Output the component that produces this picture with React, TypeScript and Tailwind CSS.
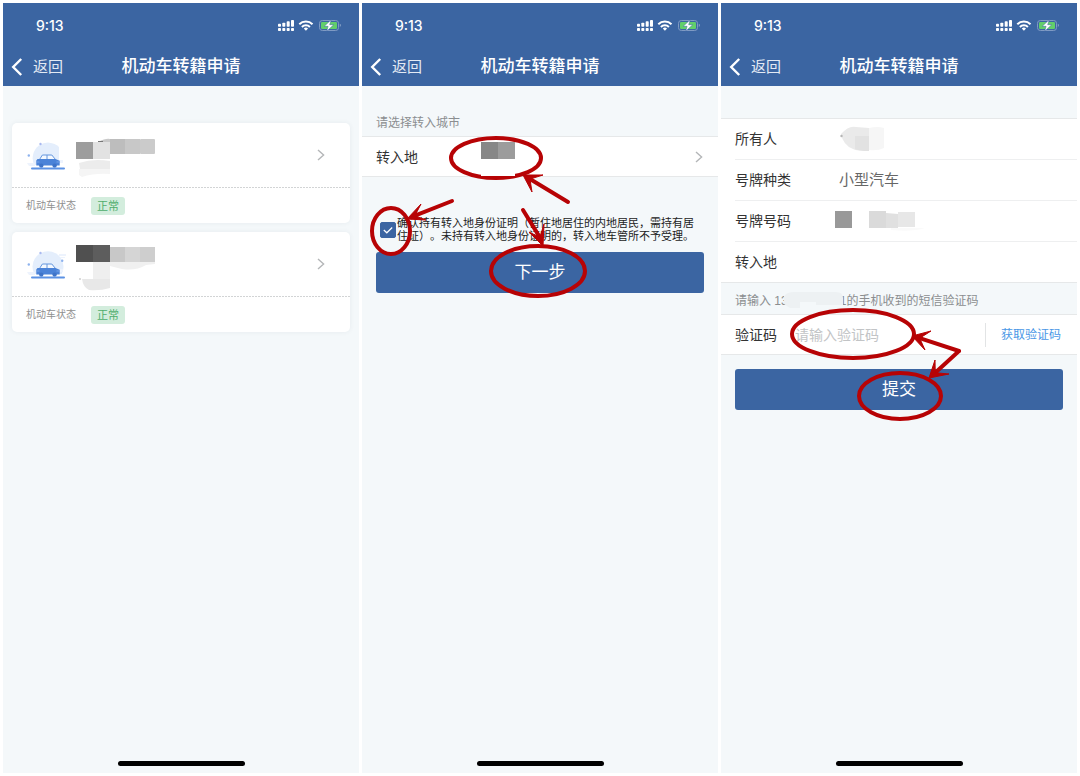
import { useState, type ReactNode } from "react";

type Point = [number, number];

function StatusBar() {
  return (
    <div className="flex h-11 items-center justify-between pr-4 pl-[33px]">
      <span className="pt-0.5 font-['Inter',sans-serif] text-sm font-medium">9:13</span>
      <svg width="66" height="14" viewBox="0 0 66 14" aria-hidden="true">
        <g fill="#fff">
          <rect x="1" y="10" width="3" height="3" rx="0.8" />
          <rect x="5.3" y="10" width="3" height="3" rx="0.8" />
          <rect x="9.7" y="10" width="3" height="3" rx="0.8" />
          <rect x="14" y="10" width="3" height="3" rx="0.8" />
          <rect x="1" y="5.8" width="3" height="3" rx="0.8" />
          <rect x="5.3" y="4.8" width="3" height="4" rx="0.8" />
          <rect x="9.7" y="3.3" width="3" height="5.5" rx="0.8" />
          <rect x="14" y="2" width="3" height="6.8" rx="0.8" />
        </g>
        <g fill="none" stroke="#fff" strokeWidth="2">
          <path d="M22.3 6.2a9.4 9.4 0 0 1 13.2 0" />
          <path d="M24.9 9a5.7 5.7 0 0 1 8 0" />
        </g>
        <path d="M26.8 10.5a3.1 3.1 0 0 1 4.2 0l-2.1 2.2z" fill="#fff" />
        <rect x="42.5" y="2.5" width="19" height="10" rx="2.8" fill="none" stroke="#7f9ac4" />
        <rect x="44" y="4" width="16" height="7" rx="1.2" fill="#62cf6a" />
        <path d="M62.8 5.8v3.2c1.4-.4 1.4-2.8 0-3.2z" fill="#92a9cc" />
        <path d="M54.2 1.8 47.2 8.3h3.9l-1.4 5 7-6.6h-4z" fill="#fff" stroke="#3b65a2" strokeWidth="0.5" />
      </svg>
    </div>
  );
}

function Phone({ children, marks }: { children: ReactNode; marks?: ReactNode }) {
  return (
    <section className="relative flex flex-col overflow-hidden bg-[#f4f8fa]">
      <header className="bg-[#3b65a2] text-white">
        <StatusBar />
        <div className="grid h-[39px] grid-cols-[1fr_auto_1fr] items-center">
          <a href="#back" className="flex items-center gap-2.5 pl-2 text-[15px] leading-5 text-[#e3eaf4]">
            <svg width="12" height="20" viewBox="0 0 12 20" aria-hidden="true">
              <path d="M10.2 2 2.2 10l8 8" fill="none" stroke="#fff" strokeWidth="2.4" />
            </svg>
            返回
          </a>
          <h1 className="text-[17px] leading-6 font-medium">机动车转籍申请</h1>
        </div>
      </header>
      <main className="flex-1">{children}</main>
      <div className="mx-auto mb-[7px] h-[5px] w-[127px] rounded-full bg-black" />
      {marks && (
        <svg className="pointer-events-none absolute inset-0 z-10 h-full w-full" fill="none" stroke="#b70305" strokeWidth="4" aria-hidden="true">
          {marks}
        </svg>
      )}
    </section>
  );
}

function Arrow({ from, tip, barbs }: { from: Point; tip: Point; barbs: [Point, Point] }) {
  const [a, b] = barbs;
  const neck: Point = [(a[0] + b[0]) * 0.24 + tip[0] * 0.52, (a[1] + b[1]) * 0.24 + tip[1] * 0.52];
  return (
    <g>
      <path d={`M${from} L${neck}`} strokeLinecap="round" />
      <path d={`M${tip} L${a} L${neck} L${b} Z`} fill="#b70305" strokeWidth="1" strokeLinejoin="round" />
    </g>
  );
}

function Chevron() {
  return (
    <svg width="10" height="14" viewBox="0 0 10 14" aria-hidden="true">
      <path d="M2 2l5.6 5L2 12" fill="none" stroke="#b4b6b8" strokeWidth="1.4" />
    </svg>
  );
}

function CarIcon({ full }: { full?: boolean }) {
  return (
    <svg width="42" height="32" viewBox="0 0 42 32" aria-hidden="true">
      <path
        d={full ? "M8.3 26A15.5 15.5 0 1 1 35.7 26z" : "M8.3 26A15.5 15.5 0 0 1 33 8V26z"}
        fill="#e4eefc"
      />
      <path d="M1 24h8v3H3zM32 21h5v3h-5z" fill="#edf3fd" />
      {full && <path d="M33 6h7v2h-7zM34 9h5v1h-5z" fill="#edf3fd" />}
      <circle cx="14.5" cy="5" r="1.2" fill="#a9b9f0" />
      <circle cx="2.8" cy="16.5" r="1.2" fill="#8db2ee" />
      {full && <circle cx="36.2" cy="12.8" r="1.2" fill="#8db2ee" />}
      <path d="M13.5 20.5 16.4 16h9.4l3.7 4.5z" fill="#f3f8ff" stroke="#6496de" strokeWidth="1" />
      <path d="M21 16v4.5" stroke="#6496de" />
      <path d="M11.5 20h18l4.2 1.8v4.7H10.3v-5z" fill="#4b83d8" />
      <path d="M10.5 23h3M30.5 23h3" stroke="#78a4e8" />
      <circle cx="15.3" cy="26.6" r="2.2" fill="#3f74c8" />
      <circle cx="28.6" cy="26.6" r="2.2" fill="#3f74c8" />
      <path d="M6 29.4h32" stroke="#5c92e4" strokeWidth="2" strokeLinecap="round" />
    </svg>
  );
}

function MosaicLight() {
  return (
    <svg width="84" height="46" viewBox="0 0 84 46" aria-hidden="true">
      <rect y="6" width="17" height="17" fill="#9d9d9d" />
      <rect x="17" y="6" width="17" height="17" fill="#e2e2e2" />
      <path d="M22 6q8-4 12-3v3z" fill="#c9c9c9" />
      <path d="M22 5.5h5" stroke="#777" />
      <rect x="34" y="3" width="15" height="15" fill="#bdbdbd" />
      <rect x="49" y="3" width="15" height="15" fill="#c8c8c8" />
      <rect x="64" y="3" width="15" height="15" rx="1" fill="#cbcbcb" />
      <path d="M3 27q14-5 31-2v8H4z" fill="#ececec" />
      <path d="M3 33h31v5q-16-1-28 3l-3-2z" fill="#f5f5f5" />
    </svg>
  );
}

function MosaicDark() {
  return (
    <svg width="84" height="48" viewBox="0 0 84 48" aria-hidden="true">
      <rect y="1" width="17" height="17" fill="#505050" />
      <rect x="17" y="1" width="17" height="17" fill="#5d5d5d" />
      <rect x="34" y="3" width="15" height="15" fill="#c8c8c8" />
      <rect x="49" y="3" width="15" height="15" fill="#d5d5d5" />
      <rect x="64" y="3" width="15" height="15" fill="#cecece" />
      <path d="M34 18h45v2l-9 1q-10 6-24 4l-12-3z" fill="#f0f0f0" />
      <rect x="17" y="18" width="17" height="17" fill="#efefef" />
      <path d="M6 35h28v9q-10 3-21 2-6-3-7-11z" fill="#e8e8e8" />
      <circle cx="4" cy="35" r="0.7" fill="#999" />
    </svg>
  );
}

function VehicleCard({ dark }: { dark?: boolean }) {
  return (
    <article className="rounded-[5px] bg-white shadow-[0_0_5px_rgba(40,60,80,0.07)]">
      <a href="#vehicle" aria-label="机动车" className="flex h-16 items-center pr-6 pl-[14px]">
        <CarIcon full={dark} />
        <span className="ml-2 flex-1 pt-2">{dark ? <MosaicDark /> : <MosaicLight />}</span>
        <Chevron />
      </a>
      <div className="h-px bg-[repeating-linear-gradient(90deg,#d2d4d5_0_2px,transparent_2px_3px)]" />
      <div className="flex h-[35px] items-center gap-[15px] px-[14px]">
        <span className="text-[10px] leading-4 text-[#8f8f8f]">机动车状态</span>
        <span className="rounded-[3px] bg-[#d3eddd] px-[6px] text-[11px] leading-[18px] text-[#4fad6c]">正常</span>
      </div>
    </article>
  );
}

function PrimaryButton({ children }: { children: ReactNode }) {
  return (
    <button type="button" className="block h-[41px] w-full rounded-[3px] bg-[#3b65a2] text-[17px] leading-6 text-white">
      {children}
    </button>
  );
}

function CityScreen() {
  const [checked, setChecked] = useState(true);
  return (
    <>
      <p className="px-[14px] pt-7 pb-1 text-xs leading-[18px] text-[#8b8e90]">请选择转入城市</p>
      <a href="#city" className="flex h-[41px] items-center border-y border-[#e6e8e9] bg-white pr-[14px] pl-[14px] text-sm text-[#333]">
        <span className="w-[105px]">转入地</span>
        <span className="flex-1 self-end">
          <svg className="relative z-20" width="34" height="34" viewBox="0 0 34 34" aria-hidden="true">
            <rect width="34" height="34" fill="#fff" />
            <rect width="17" height="17" fill="#878787" />
            <rect x="17" width="17" height="17" fill="#9c9c9c" />
          </svg>
        </span>
        <Chevron />
      </a>
      <div className="px-[14px] pt-10">
        <label className="mb-[9px] flex items-center pl-1 text-[11px] leading-[13px] text-[#222] [text-spacing-trim:space-all]">
          <span className="relative mr-px flex h-4 w-4 shrink-0">
            <input
              type="checkbox"
              checked={checked}
              onChange={(e) => setChecked(e.target.checked)}
              className="h-4 w-4 appearance-none rounded-[2px] border border-[#3b65a2] checked:bg-[#3b65a2]"
            />
            <svg className="pointer-events-none absolute inset-0" width="16" height="16" viewBox="0 0 16 16" aria-hidden="true">
              <path d="M3.8 8l3 2.8 5.4-5.3" fill="none" stroke="#fff" strokeWidth="1.2" />
            </svg>
          </span>
          <span>确认持有转入地身份证明（暂住地居住的内地居民，需持有居住证）。未持有转入地身份证明的，转入地车管所不予受理。</span>
        </label>
        <PrimaryButton>下一步</PrimaryButton>
      </div>
    </>
  );
}

function InfoRow({ label, children }: { label: string; children?: ReactNode }) {
  return (
    <div className="flex h-[41px] items-center border-b border-[#eeeff0] last:h-10 last:border-b-0">
      <dt className="w-[104px] text-sm text-[#333]">{label}</dt>
      <dd className="text-[15px] text-[#666]">{children}</dd>
    </div>
  );
}

function SubmitScreen() {
  return (
    <>
      <dl className="mt-8 border-y border-[#e6e8e9] bg-white pl-[14px]">
        <InfoRow label="所有人">
          <svg width="50" height="28" viewBox="0 0 50 28" aria-hidden="true">
            <path d="M2 9q8-9 15-7l13 1v23q-12 0-16-2Q4 20 2 9z" fill="#eaeaea" />
            <path d="M16 11h14v15q-9 0-14-2z" fill="#e2e2e2" />
            <path d="M30 3q9-2 15 0v20q-6 3-15 2z" fill="#f6f6f6" />
            <circle cx="2.5" cy="11" r="1.2" fill="#b5b5b5" />
          </svg>
        </InfoRow>
        <InfoRow label="号牌种类">小型汽车</InfoRow>
        <InfoRow label="号牌号码">
          <svg className="-ml-1" width="94" height="22" viewBox="0 0 94 22" aria-hidden="true">
            <rect y="1" width="17" height="17" fill="#999" />
            <rect x="34" y="1" width="17" height="17" fill="#dadada" />
            <path d="M51 3l12 1v14H51z" fill="#e0e0e0" />
            <path d="M63 2h17v15H63z" fill="#e7e7e7" />
            <path d="M56 18h34q-12 4-34 2z" fill="#fafafa" />
          </svg>
        </InfoRow>
        <InfoRow label="转入地" />
      </dl>
      <p className="flex h-[31px] items-center pt-1 pl-[14px] text-xs text-[#8b8e90]">
        请输入 13
        <svg className="relative z-10 -ml-1" width="60" height="20" viewBox="0 0 60 20" aria-hidden="true">
          <path d="M0 5q3-4 10-4h42q7 0 7 6v7H32v-3H16v6H6l-6-4z" fill="#edf1f3" />
        </svg>
        <span className="-ml-1">1</span>的手机收到的短信验证码
      </p>
      <div className="flex h-[41px] items-center border-y border-[#e6e8e9] bg-white pr-4 pl-[14px]">
        <label htmlFor="code" className="text-sm text-[#333]">验证码</label>
        <input id="code" placeholder="请输入验证码" className="ml-[18px] min-w-0 flex-1 bg-transparent text-sm placeholder:text-[#c2c4c6]" />
        <button type="button" className="h-6 border-l border-[#e2e4e5] pl-[15px] text-xs text-[#4a97e6]">获取验证码</button>
      </div>
      <div className="px-[14px] pt-[14px]">
        <PrimaryButton>提交</PrimaryButton>
      </div>
    </>
  );
}

export default function App() {
  return (
    <div className="grid min-h-screen grid-cols-3 gap-[3px] bg-white p-[3px] font-['Liberation_Sans','Noto_Sans_CJK_SC',sans-serif]">
      <Phone>
        <div className="flex flex-col gap-[9px] px-[9px] pt-[37px]">
          <VehicleCard />
          <VehicleCard dark />
        </div>
      </Phone>
      <Phone
        marks={
          <>
            <ellipse cx="134" cy="155" rx="45" ry="20" />
            <ellipse cx="29" cy="228" rx="19" ry="23" />
            <ellipse cx="176" cy="268" rx="47" ry="25" />
            <Arrow from={[206, 199]} tip={[161, 172]} barbs={[[181, 172], [170, 189]]} />
            <Arrow from={[90, 198]} tip={[45, 216]} barbs={[[59, 201], [64, 217]]} />
            <Arrow from={[161, 207]} tip={[181, 243]} barbs={[[167, 229], [182, 221]]} />
          </>
        }
      >
        <CityScreen />
      </Phone>
      <Phone
        marks={
          <>
            <ellipse cx="132" cy="331" rx="61" ry="24" />
            <ellipse cx="179" cy="393" rx="41" ry="23" />
            <Arrow from={[238, 348]} tip={[191, 333]} barbs={[[210, 328], [204, 347]]} />
            <Arrow from={[238, 348]} tip={[208, 375]} barbs={[[214, 357], [228, 371]]} />
          </>
        }
      >
        <SubmitScreen />
      </Phone>
    </div>
  );
}
